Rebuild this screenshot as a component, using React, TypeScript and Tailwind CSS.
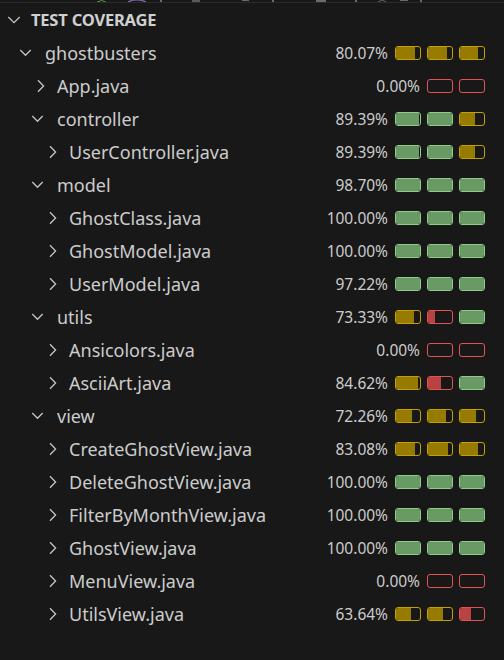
import React from "react";

type Bar = { kind: "y" | "g" | "r"; fill: number };
type Row = {
  name: string;
  depth: 0 | 1 | 2;
  open?: boolean;
  pct: string;
  bars: Bar[];
};

const Y = (fill: number): Bar => ({ kind: "y", fill });
const G = (fill = 100): Bar => ({ kind: "g", fill });
const R = (fill = 0): Bar => ({ kind: "r", fill });

const rows: Row[] = [
  { name: "ghostbusters", depth: 0, open: true, pct: "80.07%", bars: [Y(78), Y(80), Y(75)] },
  { name: "App.java", depth: 1, pct: "0.00%", bars: [R(), R()] },
  { name: "controller", depth: 1, open: true, pct: "89.39%", bars: [G(95), G(), Y(62)] },
  { name: "UserController.java", depth: 2, pct: "89.39%", bars: [G(95), G(), Y(62)] },
  { name: "model", depth: 1, open: true, pct: "98.70%", bars: [G(), G(), G()] },
  { name: "GhostClass.java", depth: 2, pct: "100.00%", bars: [G(), G(), G()] },
  { name: "GhostModel.java", depth: 2, pct: "100.00%", bars: [G(), G(), G()] },
  { name: "UserModel.java", depth: 2, pct: "97.22%", bars: [G(), G(), G()] },
  { name: "utils", depth: 1, open: true, pct: "73.33%", bars: [Y(77), R(30), G()] },
  { name: "Ansicolors.java", depth: 2, pct: "0.00%", bars: [R(), R()] },
  { name: "AsciiArt.java", depth: 2, pct: "84.62%", bars: [Y(92), R(55), G()] },
  { name: "view", depth: 1, open: true, pct: "72.26%", bars: [Y(66), Y(75), Y(68)] },
  { name: "CreateGhostView.java", depth: 2, pct: "83.08%", bars: [Y(80), Y(82), Y(75)] },
  { name: "DeleteGhostView.java", depth: 2, pct: "100.00%", bars: [G(), G(), G()] },
  { name: "FilterByMonthView.java", depth: 2, pct: "100.00%", bars: [G(), G(), G()] },
  { name: "GhostView.java", depth: 2, pct: "100.00%", bars: [G(), G(), G()] },
  { name: "MenuView.java", depth: 2, pct: "0.00%", bars: [R(), R()] },
  { name: "UtilsView.java", depth: 2, pct: "63.64%", bars: [Y(62), Y(62), R(45)] },
];

const indent = ["pl-[13px]", "pl-[25px]", "pl-[37px]"];

const barBorder = {
  y: "border-[#c4a000]",
  g: "border-[#8fcc87]",
  r: "border-[#e25252]",
};
const barFill = {
  y: "bg-[#977a00]",
  g: "bg-[#699a66]",
  r: "bg-[#b94242]",
};

function Chevron({ open }: { open?: boolean }) {
  return (
    <svg width="24" height="24" viewBox="0 0 24 24" className="shrink-0">
      {open ? (
        <path d="M7.3 9 L12.5 14.3 L17.7 9" fill="none" stroke="#c5c5c5" strokeWidth="1.3" />
      ) : (
        <path d="M13 6.2 L18.6 12 L13 17.8" fill="none" stroke="#c5c5c5" strokeWidth="1.3" />
      )}
    </svg>
  );
}

function CoverageBar({ bar }: { bar: Bar }) {
  return (
    <div
      className={`h-[14px] w-[26px] overflow-hidden rounded-[3px] border ${barBorder[bar.kind]}`}
    >
      <div className={`h-full ${barFill[bar.kind]}`} style={{ width: `${bar.fill}%` }} />
    </div>
  );
}

export default function App() {
  return (
    <div
      className="h-[660px] w-[504px] overflow-hidden bg-[#181818] text-[#cccccc]"
      style={{ fontFamily: '"Noto Sans", "Open Sans", sans-serif' }}
    >
      {/* cut-off tab strip at the very top */}
      <div className="h-[3px] border-b border-[#2b2b2b]">
        <svg width="504" height="2" viewBox="0 0 504 2" className="block">
          <path d="M97 2 Q102 -1 106 2" stroke="#5f8f55" strokeWidth="1" fill="none" />
          <path d="M128 2 Q136 -2 146 2" stroke="#8f6bb8" strokeWidth="1.2" fill="none" />
          <rect x="160" y="0" width="2" height="2" fill="#6a6a6a" />
          <rect x="192" y="0" width="8" height="2" fill="#5a5a5a" />
          <rect x="242" y="0" width="7" height="1" fill="#6a6a6a" />
          <rect x="272" y="0" width="2" height="2" fill="#6a6a6a" />
          <rect x="316" y="0" width="10" height="2" fill="#6a6a6a" />
          <rect x="355" y="0" width="2" height="2" fill="#6a6a6a" />
          <path d="M378 2 L382 0 L386 2" stroke="#6a6a6a" strokeWidth="1" fill="none" />
          <rect x="400" y="0" width="8" height="1" fill="#6a6a6a" />
          <rect x="420" y="0" width="2" height="2" fill="#6a6a6a" />
        </svg>
      </div>

      {/* section header */}
      <div className="flex h-[33px] items-center pl-[2px]">
        <svg width="24" height="24" viewBox="0 0 24 24" className="shrink-0">
          <path d="M6.3 9 L12 14.6 L17.7 9" fill="none" stroke="#c5c5c5" strokeWidth="1.3" />
        </svg>
        <span className="ml-[5px] text-[16.5px] leading-[24px] font-bold tracking-[-0.2px] text-[#d0d0d0]">
          TEST COVERAGE
        </span>
      </div>

      {rows.map((row) => (
        <div key={row.name} className={`flex h-[33px] items-center pr-[19px] ${indent[row.depth]}`}>
          <Chevron open={row.open} />
          <span className="ml-[8px] truncate text-[18px] leading-[26px]">{row.name}</span>
          <div className="ml-auto flex items-center gap-[6px]">
            <span className="mr-px text-[15.5px] leading-[24px] text-[#cccccc]">{row.pct}</span>
            {row.bars.map((b, i) => (
              <CoverageBar key={i} bar={b} />
            ))}
          </div>
        </div>
      ))}
    </div>
  );
}
